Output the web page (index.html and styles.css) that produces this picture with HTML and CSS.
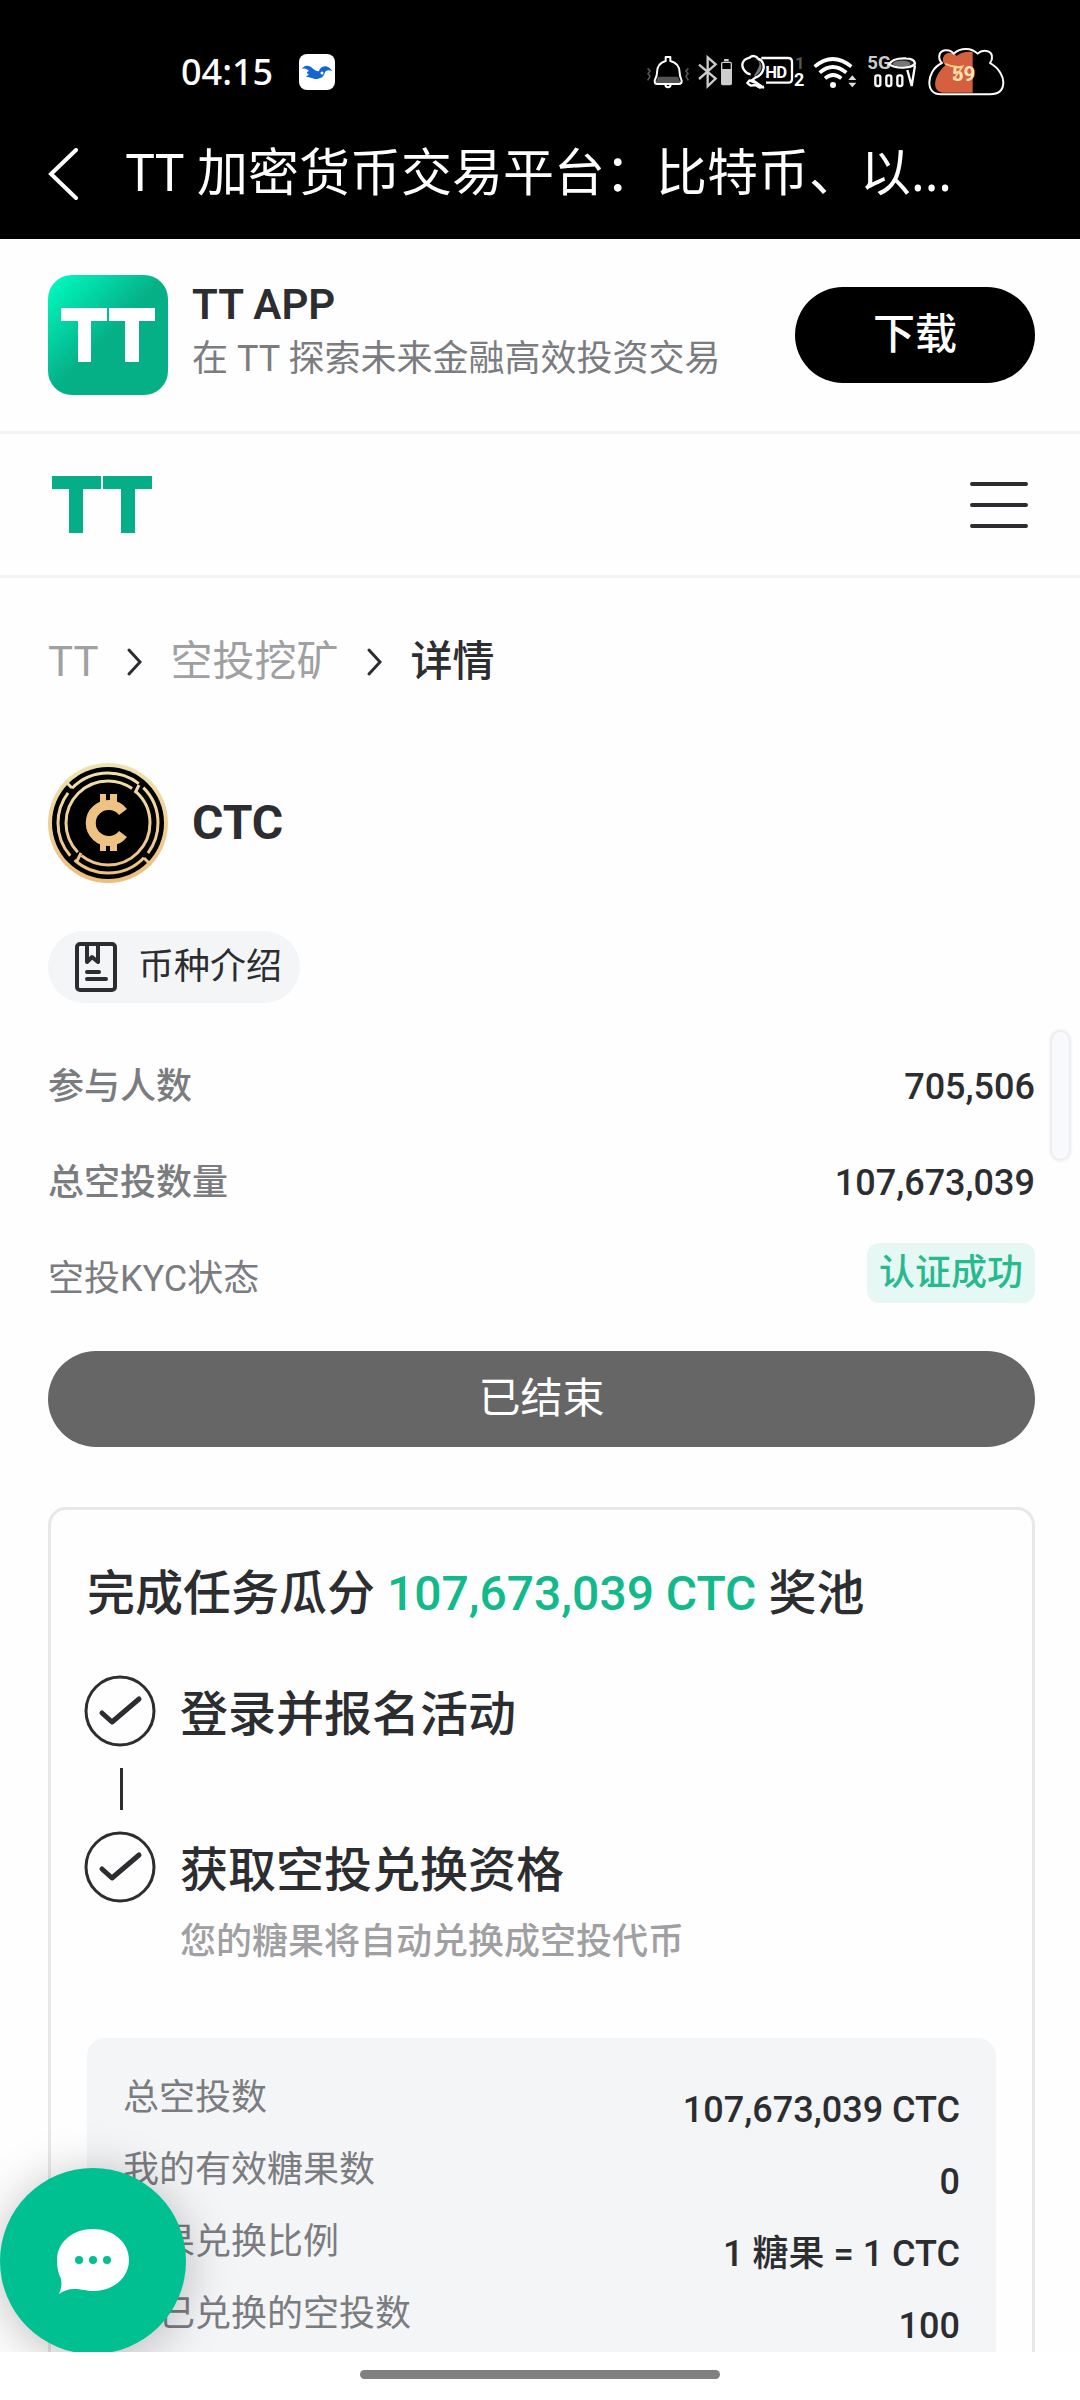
FILE: index.html
```html
<!DOCTYPE html>
<html lang="zh-CN">
<head>
    <meta charset="UTF-8">
    <meta name="viewport" content="width=device-width, initial-scale=1.0">
    <title>TT 加密货币交易平台</title>
    <link rel="stylesheet" href="styles.css">
</head>
<body>
    <header class="system">
        <div class="status-bar">
            <span class="clock">04:15</span>
            <svg class="bird" viewBox="0 0 36 36" width="36" height="36">
                <rect width="36" height="36" rx="8" fill="#fff"/>
                <path fill="#1464d2" d="M3 15c2-4 6-4 9-2 3 2 5 5 8 4 1-4 6-6 9-4 2 1 3 2 4 4-3-1-5-1-7 1-1 5-5 7-9 7-3 0-5-2-10-2l3-3c-2 0-2-1-2-2l2-1c-2-2-4-3-7-2z"/>
                <circle cx="23" cy="19" r="1.5" fill="#fff"/>
            </svg>
            <div class="status-icons">
                <svg viewBox="135 51 138 150" width="46" height="50" fill="none" stroke="#fff" stroke-width="6">
                    <path d="M143 115l7 8-6 8 6 8-7 12M265 115l-7 8 6 8-6 8 7 12" stroke="#555" stroke-width="5"/>
                    <path d="M174 140h60l8 20h-76z" fill="#555" stroke="none"/>
                    <path d="M197 81h14v12c20 5 28 18 28 35 0 14 6 18 6 26 0 6-4 8-8 8h-66c-5 0-7-3-7-8 0-8 7-12 7-26 0-17 7-30 26-35z" stroke-linejoin="round"/>
                    <path d="M196 163q0 9 8 9t8-9"/>
                </svg>
                <svg viewBox="291 51 111 150" width="37" height="50" fill="none" stroke="#ccc" stroke-width="7">
                    <path d="M297 104l50 42-24 23V82l24 21-50 44"/>
                    <path d="M372 87h14v7h-14z" fill="#ccc" stroke="none"/>
                    <rect x="365" y="97" width="29" height="67" rx="4" stroke-width="4"/>
                    <rect x="364" y="117" width="31" height="47" rx="3" fill="#ccc" stroke="none"/>
                </svg>
                <svg viewBox="420 51 201 150" width="67" height="50" fill="none" stroke="#fff" stroke-width="7">
                    <path d="M458 88c18 0 24 10 18 24s-12 18-14 28c14-8 26-20 22-36-4-12-12-18-26-16z" fill="#777" stroke="none"/>
                    <path d="M452 133c-16-2-30-22-23-36 4-10 14-12 20-14 8-8 20-6 26 4 12 2 20 20 14 34-3 8-12 18-23 22l-9 7 35 24M465 158l-16-7-7 8 10 8 14-2 14 8 12-3" stroke-linejoin="round"/>
                    <path d="M484 84h80q12 0 12 12v50q0 12-12 12h-66"/>
                    <g fill="#fff" stroke="none" class="svg-text">
                        <text x="496" y="143" font-size="50">H</text>
                        <text x="529" y="143" font-size="50">D</text>
                        <text x="585" y="117" font-size="50" fill="#555">1</text>
                        <text x="582" y="168" font-size="54">2</text>
                    </g>
                </svg>
                <svg viewBox="639 51 144 150" width="48" height="50" fill="none" stroke="#fff" stroke-width="11">
                    <path d="M644 110q54-46 110 0M659 128q39-34 80 0M675 145q24-20 49 0"/>
                    <circle cx="699" cy="165" r="9" fill="#fff" stroke="none"/>
                    <path d="M745 150l12-14 12 14zM745 158l12 14 12-14z" fill="#ddd" stroke="none"/>
                </svg>
                <svg viewBox="801 51 162 150" width="54" height="50" fill="none" stroke="#fff" stroke-width="7">
                    <text x="802" y="118" font-size="56" fill="#ccc" stroke="none" class="svg-text">5G</text>
                    <path d="M868 103c6-14 24-19 50-18 18 0 27 8 27 16-8 14-58 16-77 2z" fill="#222"/>
                    <ellipse cx="905" cy="101" rx="26" ry="9" fill="#777" stroke="none"/>
                    <rect x="826" y="136" width="15" height="32" rx="6"/>
                    <rect x="859" y="136" width="15" height="32" rx="6"/>
                    <rect x="892" y="136" width="15" height="32" rx="6"/>
                    <path d="M922 120l13 48 10-62"/>
                </svg>
                <svg viewBox="981 51 234 150" width="78" height="50" fill="none" stroke="#fff" stroke-width="6">
                    <path d="M1118 66v122h-90c-34-4-28-50 8-82-14-14-8-38 16-38 8 0 14 4 18 10 12-12 34-14 48-12z" fill="#d4603f" stroke="none"/>
                    <text x="1055" y="152" font-size="62" fill="#ffe3b5" stroke="none" class="svg-text">59</text>
                    <path d="M1036 101q26 14 52 8l-28 40" stroke="#ffd089" stroke-width="5"/>
                    <path d="M1026 99c-14-14-10-36 10-38 10-1 20 3 25 10 22-20 54-18 72 0 14-14 42-10 43 9 1 8-2 14-6 19 28 16 40 40 40 58 0 26-16 36-40 36h-148c-22 0-34-14-34-36 0-20 12-46 38-58z" stroke-linejoin="round"/>
                </svg>
            </div>
        </div>
        <div class="title-bar">
            <button class="back" aria-label="返回">
                <svg viewBox="0 0 30 52" width="30" height="52"><path d="M28 2L3 26l25 24" fill="none" stroke="#fff" stroke-width="4" stroke-linecap="round"/></svg>
            </button>
            <h1>TT 加密货币交易平台：比特币、以...</h1>
        </div>
    </header>

    <div class="viewport">
        <main class="page">
            <section class="app-banner">
                <svg class="app-icon" viewBox="0 0 120 120" width="120" height="120">
                    <defs>
                        <linearGradient id="app-bg" x1="0" y1="0" x2="1" y2="1">
                            <stop offset="0" stop-color="#00ffc3"/>
                            <stop offset=".5" stop-color="#05b087"/>
                        </linearGradient>
                    </defs>
                    <rect width="120" height="120" rx="24" fill="url(#app-bg)"/>
                    <path fill="#fff" d="M13 33h46v13H43v41H30V46H13zM61 33h46v13H91v41H77V46H61z"/>
                </svg>
                <div class="app-text">
                    <h2>TT APP</h2>
                    <p>在 TT 探索未来金融高效投资交易</p>
                </div>
                <button class="download">下载</button>
            </section>

            <nav class="site-nav">
                <a href="#" aria-label="TT">
                    <svg viewBox="0 0 100 57" width="100" height="57"><path fill="#05ae86" d="M0 0h49v13H31v44H17V13H0zM51 0h49v13H83v44H69V13H51z"/></svg>
                </a>
                <button class="menu" aria-label="菜单">
                    <svg viewBox="0 0 58 46" width="58" height="46"><path d="M2 2h54M2 23h54M2 44h54" stroke="#2c2d30" stroke-width="4" stroke-linecap="round"/></svg>
                </button>
            </nav>

            <div class="content">
                <nav class="breadcrumb">
                    <a href="#">TT</a>
                    <svg viewBox="0 0 36 36" width="36" height="36"><path d="M13 6l11 12-11 12"/></svg>
                    <a href="#">空投挖矿</a>
                    <svg viewBox="0 0 36 36" width="36" height="36"><path d="M13 6l11 12-11 12"/></svg>
                    <span>详情</span>
                </nav>

                <div class="coin">
                    <svg viewBox="0 0 120 120" width="120" height="120" fill="none">
                        <defs>
                            <linearGradient id="gold" x1="0" y1="0" x2="0" y2="120" gradientUnits="userSpaceOnUse">
                                <stop offset="0" stop-color="#efe3b0"/>
                                <stop offset="1" stop-color="#edbd7c"/>
                            </linearGradient>
                        </defs>
                        <circle cx="60" cy="60" r="60" fill="url(#gold)"/>
                        <circle cx="60" cy="60" r="56" fill="#000"/>
                        <g stroke="url(#gold)" stroke-width="3">
                            <circle cx="60" cy="60" r="50" pathLength="360" stroke-dasharray="37 7 88 7 78 7 84 7 45 0"/>
                            <circle cx="60" cy="60" r="42" pathLength="360" stroke-dasharray="129 7 169 7 48 0"/>
                            <path d="M87 30l4-8M33 90l-4 8M24 25l-7-7M96 95l7 7"/>
                        </g>
                        <path d="M75 49A18 18 0 1 0 75 71" stroke="#edc283" stroke-width="10"/>
                        <path d="M52 31h6v9h-6zM62 31h7v9h-7zM52 80h6v8h-6zM62 80h7v8h-7z" fill="#edc283"/>
                    </svg>
                    <h2>CTC</h2>
                </div>

                <a href="#" class="intro">
                    <svg viewBox="0 0 42 50" width="42" height="50" fill="none" stroke="#2c2d30" stroke-width="4" stroke-linecap="round" stroke-linejoin="round">
                        <rect x="2" y="2" width="38" height="46" rx="3"/>
                        <path d="M12 3v17l5-5 6 5V3M12 30h12M12 37h19"/>
                    </svg>
                    币种介绍
                </a>

                <dl class="stats">
                    <div><dt>参与人数</dt><dd>705,506</dd></div>
                    <div><dt>总空投数量</dt><dd>107,673,039</dd></div>
                    <div><dt class="light">空投KYC状态</dt><dd class="badge">认证成功</dd></div>
                </dl>

                <button class="ended">已结束</button>

                <section class="card">
                    <h2>完成任务瓜分 <span>107,673,039 CTC</span> 奖池</h2>
                    <div class="steps">
                        <div class="step">
                            <svg viewBox="0 0 72 72" width="72" height="72"><circle cx="36" cy="36" r="34"/><path d="M18 38l10 9 27-23"/></svg>
                            <h3>登录并报名活动</h3>
                        </div>
                        <div class="connector"></div>
                        <div class="step">
                            <svg viewBox="0 0 72 72" width="72" height="72"><circle cx="36" cy="36" r="34"/><path d="M18 38l10 9 27-23"/></svg>
                            <h3>获取空投兑换资格</h3>
                        </div>
                        <p>您的糖果将自动兑换成空投代币</p>
                    </div>
                    <dl class="summary">
                        <div><dt>总空投数</dt><dd>107,673,039 CTC</dd></div>
                        <div><dt>我的有效糖果数</dt><dd>0</dd></div>
                        <div><dt>糖果兑换比例</dt><dd>1 糖果 = 1 CTC</dd></div>
                        <div><dt>我已兑换的空投数</dt><dd>100</dd></div>
                    </dl>
                </section>
            </div>
        </main>
        <button class="chat" aria-label="客服">
            <svg viewBox="0 0 72 65" width="72" height="65">
                <path fill="#fff" d="M36 0c20 0 36 13 36 31S56 62 36 62c-7 0-11-2-19-2-6 0-11 2-15 5 2-5 3-9 2-15C1 44 0 38 0 31 0 13 16 0 36 0z"/>
                <g fill="#00c091"><circle cx="22" cy="31" r="4"/><circle cx="36" cy="31" r="4"/><circle cx="50" cy="31" r="4"/></g>
            </svg>
        </button>
    </div>
    <div class="side-handle"></div>
    <footer class="gesture-bar"><div></div></footer>
</body>
</html>
```
FILE: styles.css
```css
* {
    box-sizing: border-box;
    margin: 0;
    padding: 0;
}
body {
    display: flex;
    flex-direction: column;
    height: 100vh;
    font-family: Roboto, "Noto Sans CJK SC", sans-serif;
    font-size: 36px;
    line-height: 48px;
    color: #2c2d30;
    background: #fefefe;
}
button {
    border: none;
    background: none;
    font: inherit;
    cursor: pointer;
}
a {
    color: inherit;
    text-decoration: none;
}
svg {
    display: block;
    flex: none;
}

/* Phone status and title bars */
.system {
    background: #000;
    color: #fff;
    font-family: "Noto Sans", "Noto Sans CJK SC", sans-serif;
}
.status-bar {
    display: flex;
    align-items: center;
    height: 108px;
    padding: 36px 75px 0 181px;
}
.clock {
    font-weight: 500;
}
.bird {
    margin-left: 26px;
}
.status-icons {
    display: flex;
    gap: 6px;
    margin-left: auto;
}
.svg-text {
    font-family: Roboto, sans-serif;
    font-weight: 700;
}
.title-bar {
    display: flex;
    align-items: center;
    gap: 48px;
    height: 131px;
    padding: 0 48px;
}
.title-bar h1 {
    padding-bottom: 6px;
    font-size: 51px;
    font-weight: 400;
    line-height: 72px;
    white-space: nowrap;
}

/* Scrolling page area */
.viewport {
    position: relative;
    flex: 1;
    min-height: 0;
    overflow: hidden;
}
.page {
    height: 100%;
    overflow-y: auto;
    scrollbar-width: none;
}
.app-banner {
    display: flex;
    align-items: center;
    gap: 24px;
    padding: 36px 45px 36px 48px;
    border-bottom: 3px solid #f4f4f5;
}
.app-text {
    flex: 1;
    padding-bottom: 12px;
}
.app-text h2 {
    font-size: 42px;
    font-weight: 600;
    line-height: 60px;
}
.app-text p {
    color: #7b7c80;
}
.download {
    width: 240px;
    height: 96px;
    border-radius: 48px;
    background: #000;
    color: #fff;
    font-size: 42px;
    font-weight: 500;
}
.site-nav {
    display: flex;
    align-items: center;
    justify-content: space-between;
    height: 144px;
    padding: 0 52px;
    border-bottom: 3px solid #f4f4f5;
}
.content {
    padding: 54px 45px 0 48px;
}
.breadcrumb {
    display: flex;
    align-items: center;
    gap: 18px;
    font-size: 42px;
    line-height: 60px;
}
.breadcrumb a {
    color: #a0a0a3;
}
.breadcrumb span {
    font-weight: 500;
}
.breadcrumb path {
    fill: none;
    stroke: #2c2d30;
    stroke-width: 3;
    stroke-linecap: round;
}
.coin {
    display: flex;
    align-items: center;
    gap: 24px;
    margin-top: 71px;
}
.coin h2 {
    font-size: 48px;
    font-weight: 700;
}
.intro {
    display: inline-flex;
    align-items: center;
    gap: 21px;
    height: 72px;
    margin-top: 48px;
    padding: 0 18px 0 27px;
    border-radius: 36px;
    background: #f4f5f7;
    vertical-align: top;
}
.stats {
    margin-top: 36px;
}
.stats div {
    display: flex;
    align-items: center;
    justify-content: space-between;
    height: 96px;
}
.stats dt {
    color: #7b7c80;
    font-weight: 500;
}
.stats .light {
    font-weight: 400;
}
.stats dd {
    font-weight: 500;
}
.stats .badge {
    align-self: flex-start;
    margin-top: 12px;
    padding: 0 12px;
    border-radius: 12px;
    background: #e6f8f3;
    color: #26ba8e;
    line-height: 60px;
}
.ended {
    display: block;
    width: 100%;
    height: 96px;
    margin-top: 24px;
    border-radius: 48px;
    background: #666;
    color: #fff;
    font-size: 42px;
}

/* Task card */
.card {
    margin-top: 60px;
    padding: 54px 36px 36px;
    border: 3px solid #e8e8e9;
    border-radius: 18px;
}
.card h2 {
    font-size: 48px;
    font-weight: 500;
    line-height: 60px;
}
.card h2 span {
    color: #12b98b;
}
.steps {
    margin: 51px 0 0 -3px;
}
.step {
    display: flex;
    align-items: center;
    gap: 24px;
}
.step svg {
    fill: none;
    stroke: #2c2d30;
    stroke-width: 3;
    stroke-linecap: round;
    stroke-linejoin: round;
}
.step path {
    stroke-width: 5;
}
.step h3 {
    padding-top: 8px;
    font-size: 48px;
    font-weight: 500;
}
.connector {
    width: 3px;
    height: 42px;
    margin: 21px 0 21px 36px;
    background: #2c2d30;
}
.steps p {
    margin: 15px 0 0 96px;
    color: #a0a0a3;
    font-weight: 500;
}
.summary {
    margin-top: 72px;
    padding: 24px 36px;
    border-radius: 18px;
    background: #f4f5f7;
}
.summary div {
    display: flex;
    justify-content: space-between;
    height: 72px;
}
.summary dt {
    padding-top: 12px;
    color: #7b7c80;
}
.summary dd {
    padding-top: 24px;
    font-weight: 500;
}

/* Overlays */
.chat {
    position: absolute;
    left: 0;
    bottom: -2px;
    display: flex;
    align-items: center;
    justify-content: center;
    width: 186px;
    height: 186px;
    border-radius: 50%;
    background: #00c091;
    box-shadow: 0 6px 48px rgba(0, 0, 0, 0.25);
}
.side-handle {
    position: absolute;
    top: 1032px;
    right: 11px;
    width: 17px;
    height: 127px;
    border-radius: 9px;
    background: #f8f9fd;
    box-shadow: 0 0 3px 2px #e8e8ec;
}
.gesture-bar {
    height: 48px;
    padding-top: 18px;
    background: #fff;
}
.gesture-bar div {
    width: 360px;
    height: 9px;
    margin: 0 auto;
    border-radius: 5px;
    background: #808080;
}
```
